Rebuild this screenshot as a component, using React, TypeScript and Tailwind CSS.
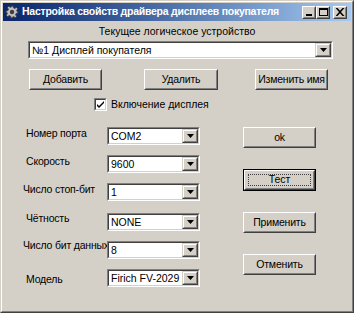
import React from "react";

const font = { fontFamily: '"Liberation Sans", Arial, sans-serif' };

const Arrow = () => (
  <div className="flex h-full w-[16px] items-center justify-center border border-t-[#d4d0c8] border-l-[#d4d0c8] border-r-[#404040] border-b-[#404040] bg-[#d4d0c8]">
    <div className="flex h-full w-full items-center justify-center border border-t-white border-l-white border-r-[#808080] border-b-[#808080]">
      <svg width="7" height="4" viewBox="0 0 7 4">
        <path d="M0 0h7L3.5 4z" fill="#000" />
      </svg>
    </div>
  </div>
);

const Combo = ({ value, className }: { value: string; className: string }) => (
  <div
    className={`flex border border-t-[#808080] border-l-[#808080] border-r-white border-b-white ${className}`}
  >
    <div className="flex min-w-0 flex-1 border border-t-[#404040] border-l-[#404040] border-r-[#d4d0c8] border-b-[#d4d0c8] bg-white">
      <span className="flex min-w-0 flex-1 items-center overflow-hidden whitespace-nowrap pl-[2px] text-[10.5px] leading-none">
        {value}
      </span>
      <Arrow />
    </div>
  </div>
);

const Btn = ({
  label,
  className = "",
  def = false,
}: {
  label: string;
  className?: string;
  def?: boolean;
}) => {
  const inner = (
    <div className="flex h-full w-full border border-t-white border-l-white border-r-[#404040] border-b-[#404040]">
      <div className="flex h-full w-full items-center justify-center border border-t-[#d4d0c8] border-l-[#d4d0c8] border-r-[#808080] border-b-[#808080] p-[2px]">
        {def ? (
          <div className="flex h-full w-full items-center justify-center border border-dotted border-[#404040] text-[10.5px]">
            {label}
          </div>
        ) : (
          <span className="whitespace-nowrap text-[10.5px] tracking-[-0.2px]">{label}</span>
        )}
      </div>
    </div>
  );
  return (
    <div className={`flex bg-[#d4d0c8] ${def ? "border border-black" : ""} ${className}`}>
      {inner}
    </div>
  );
};

const Gear = () => (
  <svg width="14" height="14" viewBox="0 0 14 14">
    <g fill="#c0c0c0" stroke="#404040" strokeWidth="1">
      <path d="M6 1h2l.4 1.8 1.3.6 1.6-1 1.4 1.4-1 1.6.6 1.3L13 6v2l-1.8.4-.6 1.3 1 1.6-1.4 1.4-1.6-1-1.3.6L8 13H6l-.4-1.8-1.3-.6-1.6 1-1.4-1.4 1-1.6-.6-1.3L1 8V6l1.8-.4.6-1.3-1-1.6 1.4-1.4 1.6 1 1.3-.6z" />
    </g>
    <circle cx="7" cy="7" r="2.2" fill="#404040" />
  </svg>
);

const TitleBtn = ({ kind }: { kind: "min" | "max" | "close" }) => (
  <div className="flex h-[13px] w-[14px] border border-t-white border-l-white border-r-[#404040] border-b-[#404040] bg-[#d4d0c8]">
    <div className="flex h-full w-full items-center justify-center border border-t-[#d4d0c8] border-l-[#d4d0c8] border-r-[#808080] border-b-[#808080]">
      <svg width="9" height="8" viewBox="0 0 9 8">
        {kind === "min" && <rect x="1" y="6" width="6" height="2" fill="#000" />}
        {kind === "max" && (
          <path d="M0 0h9v8H0zM1 2v5h7V2z" fill="#000" fillRule="evenodd" />
        )}
        {kind === "close" && (
          <path d="M1 0l2.5 2.8L6 0h2L4.5 4 8 8H6L3.5 5.2 1 8H-1l3.5-4L-1 0z" fill="#000" transform="translate(0.5 0)" />
        )}
      </svg>
    </div>
  </div>
);

const rows = [
  { label: "Номер порта", value: "COM2", pl: "pl-[3px]", lift: "mb-[6px]", mt: "mt-0" },
  { label: "Скорость", value: "9600", pl: "pl-[3px]", lift: "mb-[6px]", mt: "mt-[10px]" },
  { label: "Число стоп-бит", value: "1", pl: "pl-0", lift: "mb-[6px]", mt: "mt-[10px]" },
  { label: "Чётность", value: "NONE", pl: "pl-[3px]", lift: "mb-[8px]", mt: "mt-[12px]" },
  { label: "Число бит данных", value: "8", pl: "pl-0", lift: "mb-[10px]", mt: "mt-[10px]" },
  { label: "Модель", value: "Firich FV-2029", pl: "pl-[3px]", lift: "mt-[2px]", mt: "mt-[10px]" },
];

export default function App() {
  return (
    <div
      className="h-[313px] w-[354px] border border-t-[#d4d0c8] border-l-[#d4d0c8] border-r-[#404040] border-b-[#404040] text-black"
      style={font}
    >
      <div className="flex h-full w-full flex-col border border-t-white border-l-white border-r-[#808080] border-b-[#808080] bg-[#d4d0c8] p-[1px]">
        {/* title bar */}
        <div className="flex h-[18px] items-center bg-gradient-to-r from-[#0a246a] to-[#a6caf0] pl-[2px] pr-[4px]">
          <Gear />
          <span className="ml-[3px] whitespace-nowrap text-[10.5px] font-bold tracking-[-0.25px] text-white">
            Настройка свойств драйвера дисплеев покупателя
          </span>
          <div className="ml-auto flex items-center">
            <TitleBtn kind="min" />
            <TitleBtn kind="max" />
            <div className="ml-[3px]">
              <TitleBtn kind="close" />
            </div>
          </div>
        </div>

        <div className="mt-[4px] whitespace-nowrap text-center text-[10.5px] leading-[13px]">
          Текущее логическое устройство
        </div>

        <Combo value="№1 Дисплей покупателя" className="ml-[25px] mt-[3px] h-[18px] w-[305px]" />

        <div className="mt-[10px] flex h-[21px]">
          <Btn label="Добавить" className="ml-[26px] w-[73px]" />
          <Btn label="Удалить" className="ml-[42px] w-[74px]" />
          <Btn label="Изменить имя" className="ml-[37px] w-[73px]" />
        </div>

        <div className="ml-[91px] mt-[8px] flex h-[13px] items-center">
          <div className="flex h-[13px] w-[13px] border border-t-[#808080] border-l-[#808080] border-r-white border-b-white">
            <div className="flex h-full w-full items-center justify-center border border-t-[#404040] border-l-[#404040] border-r-[#d4d0c8] border-b-[#d4d0c8] bg-white">
              <svg width="7" height="7" viewBox="0 0 7 7">
                <path d="M0 2l2 2 5-5v2L2 6 0 4z" fill="#000" transform="translate(0 1)" />
              </svg>
            </div>
          </div>
          <span className="ml-[4px] whitespace-nowrap text-[10.5px]">Включение дисплея</span>
        </div>

        <div className="mt-[16px] flex">
          <div className="ml-[20px] flex flex-col">
            {rows.map((r) => (
              <div key={r.label} className={`flex h-[18px] items-center ${r.mt}`}>
                <div className={`w-[84px] ${r.pl}`}>
                  <div className={`whitespace-nowrap text-[10.5px] leading-[12px] tracking-[-0.2px] ${r.lift}`}>
                    {r.label}
                  </div>
                </div>
                <Combo value={r.value} className="h-[18px] w-[93px]" />
              </div>
            ))}
          </div>
          <div className="ml-auto mr-[35px] flex w-[73px] flex-col">
            <Btn label="ok" className="h-[21px]" />
            <Btn label="Тест" def className="mt-[21px] h-[22px]" />
            <Btn label="Применить" className="mt-[21px] h-[21px]" />
            <Btn label="Отменить" className="mt-[21px] h-[21px]" />
          </div>
        </div>
      </div>
    </div>
  );
}
